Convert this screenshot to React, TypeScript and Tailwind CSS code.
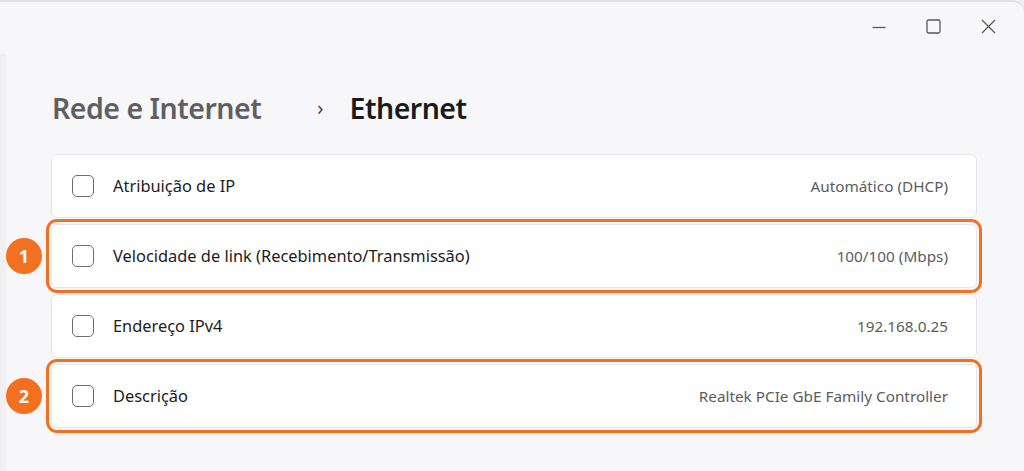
type Row = { label: string; value: string; mark?: number };

const rows: Row[] = [
  { label: "Atribuição de IP", value: "Automático (DHCP)" },
  { label: "Velocidade de link (Recebimento/Transmissão)", value: "100/100 (Mbps)", mark: 1 },
  { label: "Endereço IPv4", value: "192.168.0.25" },
  { label: "Descrição", value: "Realtek PCIe GbE Family Controller", mark: 2 },
];

function SettingRow({ row }: { row: Row }) {
  return (
    <div className="relative h-[64px] bg-white border border-[#e6e6e8] rounded-[6px] flex items-center pl-[20px] pr-[28px]">
      <div className="w-[22px] h-[22px] rounded-[5px] border-[1.5px] border-[#6e6e6e] bg-white" />
      <span className="ml-[19px] text-[16.4px] text-[#1c1c1c]">{row.label}</span>
      <span className="ml-auto text-[15.3px] text-[#5c5c5c]">{row.value}</span>
      {row.mark && (
        <>
          <div className="absolute -left-[6px] -right-[6px] -top-[6px] -bottom-[6px] border-[3px] border-[#f37021] rounded-[11px] pointer-events-none" />
          <div className="absolute -left-[46px] top-1/2 -translate-y-1/2 w-[36px] h-[36px] rounded-full bg-[#f37021] text-white font-bold text-[18px] flex items-center justify-center">
            {row.mark}
          </div>
        </>
      )}
    </div>
  );
}

export default function App() {
  return (
    <div
      className="w-[1024px] h-[471px] bg-[#eeeef0] overflow-hidden"
      style={{ fontFamily: '"Noto Sans", "Open Sans", sans-serif' }}
    >
      <div className="h-full bg-[#f7f7f9] border-t-2 border-[#e2e2e4] rounded-tr-[12px] flex">
        <div className="w-[6px] mt-[52px] bg-[#f0f0f2] shrink-0" />
        <div className="flex-1 flex flex-col">
          <div className="flex justify-end items-center h-[48px] pr-[8px] text-[#5a5a5a]">
            {/* minimize / maximize / close */}
            <div className="w-[55px] flex justify-center">
              <svg width="14" height="14" viewBox="0 0 14 14" fill="none" stroke="currentColor" strokeWidth="1.3">
                <path d="M0.5 8.5H13.5" />
              </svg>
            </div>
            <div className="w-[55px] flex justify-center">
              <svg width="15" height="15" viewBox="0 0 15 15" fill="none" stroke="currentColor" strokeWidth="1.3">
                <rect x="1" y="1" width="13" height="13" rx="1.5" />
              </svg>
            </div>
            <div className="w-[55px] flex justify-center">
              <svg width="15" height="15" viewBox="0 0 15 15" fill="none" stroke="currentColor" strokeWidth="1.3">
                <path d="M1 1L14 14M14 1L1 14" />
              </svg>
            </div>
          </div>
          <div className="flex items-center mt-[38px] pl-[46px] h-[40px]">
            <span className="text-[28.5px] font-semibold text-[#5f5f63] tracking-[-0.5px]">Rede e Internet</span>
            <span className="ml-[56px] text-[20px] text-[#444]">›</span>
            <span className="ml-[26px] text-[28.5px] font-semibold text-[#1a1a1a] tracking-[-0.5px]">Ethernet</span>
          </div>
          <div className="mt-[26px] ml-[45px] w-[926px] flex flex-col gap-[6px]">
            {rows.map((r) => (
              <SettingRow key={r.label} row={r} />
            ))}
          </div>
        </div>
      </div>
    </div>
  );
}
